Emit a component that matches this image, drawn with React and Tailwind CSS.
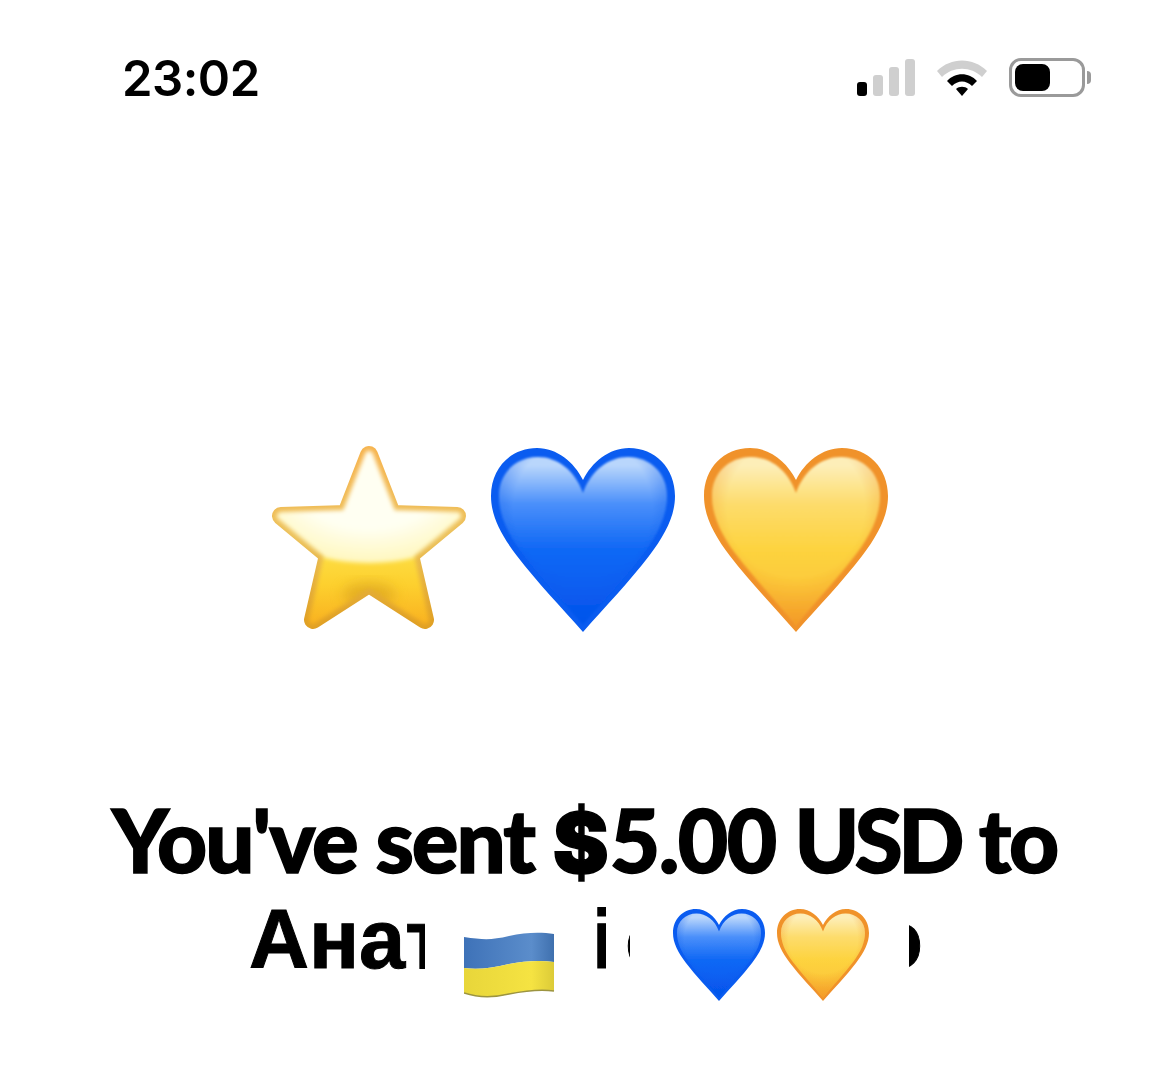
import React from 'react';

const heartOuter = 'M92 184C70 159 46 134 26 108C10 87 0 68 0 48C0 20 20 0 46 0C66 0 83 14 92 32C101 14 118 0 138 0C164 0 184 20 184 48C184 68 174 87 158 108C138 134 114 159 92 184Z';
const heartInner = 'M92 177C72 153 50 130 31 105C16 85 8 66 8 48C8 25 25 9 47 9C66 9 84 22 92 45C100 22 118 9 137 9C159 9 176 25 176 48C176 66 168 85 153 105C134 130 112 153 92 177Z';

const palettes = {
  blue: { edge: '#0a5cf0', shade: '#0454ea', stops: ['#b9d6fc', '#4a8ffa', '#1068f5', '#0657ee'] },
  yellow: { edge: '#f0922a', shade: '#f18f22', stops: ['#fdeeb8', '#fddc6c', '#fdd33f', '#fbc036'] },
};

const Heart = ({ color, size }) => {
  const p = palettes[color];
  const id = `heart-${color}-${size}`;
  return (
    <svg viewBox="0 0 184 184" width={size} height={size}>
      <defs>
        <linearGradient id={id} x1="0" y1="0" x2="0" y2="1">
          <stop offset="0.05" stopColor={p.stops[0]} />
          <stop offset="0.28" stopColor={p.stops[1]} />
          <stop offset="0.55" stopColor={p.stops[2]} />
          <stop offset="1" stopColor={p.stops[3]} />
        </linearGradient>
        <radialGradient id={`${id}-shade`} cx="0.5" cy="0.3" r="0.75">
          <stop offset="0.55" stopColor={p.shade} stopOpacity="0" />
          <stop offset="1" stopColor={p.shade} stopOpacity="0.9" />
        </radialGradient>
        <filter id={`${id}-soft`} x="-10%" y="-10%" width="120%" height="120%">
          <feGaussianBlur stdDeviation="1.2" />
        </filter>
      </defs>
      <path d={heartOuter} fill={p.edge} />
      <g filter={`url(#${id}-soft)`}>
        <path d={heartInner} fill={`url(#${id})`} />
        <path d={heartInner} fill={`url(#${id}-shade)`} />
      </g>
    </svg>
  );
};

const starLine = 'M97 10L120 69L185 71L138 110L153 175L97 139L41 175L56 110L9 71L74 69Z';

const Star = () => (
  <svg viewBox="0 0 195 186" className="w-[195px] h-[186px]">
    <defs>
      <linearGradient id="star-fill" x1="0" y1="0" x2="0" y2="1">
        <stop offset="0.55" stopColor="#fde047" />
        <stop offset="0.75" stopColor="#fdd02e" />
        <stop offset="1" stopColor="#f8ac1e" />
      </linearGradient>
      <linearGradient id="star-edge" x1="0" y1="0" x2="0" y2="1">
        <stop offset="0" stopColor="#f6b44e" />
        <stop offset="0.5" stopColor="#ecc25c" />
        <stop offset="1" stopColor="#e0a126" />
      </linearGradient>
      <radialGradient id="star-glow" cx="0.5" cy="0.5" r="0.5">
        <stop offset="0.55" stopColor="#fffff2" />
        <stop offset="1" stopColor="#fff7bd" />
      </radialGradient>
      <filter id="star-soft" x="-10%" y="-10%" width="120%" height="120%">
        <feGaussianBlur stdDeviation="2" />
      </filter>
      <filter id="star-softer" x="-30%" y="-30%" width="160%" height="160%">
        <feGaussianBlur stdDeviation="7" />
      </filter>
      <mask id="star-mask">
        <path d={starLine} fill="#fff" stroke="#fff" strokeWidth="8" strokeLinejoin="round" filter="url(#star-soft)" />
      </mask>
    </defs>
    <path d={starLine} fill="url(#star-edge)" stroke="url(#star-edge)" strokeWidth="18" strokeLinejoin="round" />
    <g mask="url(#star-mask)">
      <rect width="195" height="186" fill="url(#star-fill)" />
      <ellipse cx="97" cy="150" rx="26" ry="12" fill="#d19a1a" opacity="0.6" filter="url(#star-softer)" />
      <ellipse cx="97" cy="40" rx="125" ry="78" fill="url(#star-glow)" filter="url(#star-soft)" />
    </g>
  </svg>
);

const Flag = () => (
  <svg viewBox="0 0 91 66" className="w-[91px] h-[66px]">
    <defs>
      <linearGradient id="flag-blue" x1="0" y1="0" x2="1" y2="0">
        <stop offset="0" stopColor="#3e72b8" />
        <stop offset="0.75" stopColor="#5b8dcb" />
        <stop offset="1" stopColor="#3f70ae" />
      </linearGradient>
      <linearGradient id="flag-yellow" x1="0" y1="0" x2="1" y2="0">
        <stop offset="0" stopColor="#e8d63a" />
        <stop offset="0.75" stopColor="#f5e342" />
        <stop offset="1" stopColor="#dccb38" />
      </linearGradient>
    </defs>
    <path d="M0 5C20 8 28 8 45 4C62 0 78 0 90 2V30C76 28 60 29 45 32C28 36 14 38 0 36Z" fill="url(#flag-blue)" />
    <path d="M0 36C14 38 28 36 45 32C60 29 76 28 90 30V59C76 57 60 59 45 62C28 66 12 65 0 61Z" fill="url(#flag-yellow)" />
    <path d="M0 61C12 65 28 66 45 62C60 59 76 57 90 59" fill="none" stroke="#9c9440" strokeWidth="1.5" />
  </svg>
);

const SignalBars = () => (
  <div className="flex items-end gap-[6px] h-[37px]">
    <div className="w-[10px] h-[14px] rounded-[3px] bg-black" />
    <div className="w-[10px] h-[21px] rounded-[3px] bg-[#cfcfcf]" />
    <div className="w-[10px] h-[29px] rounded-[3px] bg-[#cfcfcf]" />
    <div className="w-[10px] h-[37px] rounded-[3px] bg-[#cfcfcf]" />
  </div>
);

const Wifi = () => (
  <svg viewBox="0 0 52 38" className="w-[52px] h-[38px]">
    <path d="M1 13C15 -1 37 -1 51 13L46 19C35 8 17 8 6 19Z" fill="#cfcfcf" />
    <path d="M11 23C19 14 33 14 41 23L36 28C30 22 22 22 16 28Z" fill="#000" />
    <path d="M20 31C23 28 29 28 32 31L26 38Z" fill="#000" />
  </svg>
);

const Battery = () => (
  <div className="flex items-center gap-[2px]">
    <div className="w-[76px] h-[39px] rounded-[12px] border-[3px] border-[#9a9a9a] p-[3px]">
      <div className="w-[35px] h-full rounded-[8px] bg-black" />
    </div>
    <div className="w-[4px] h-[13px] rounded-r-full bg-[#9a9a9a]" />
  </div>
);

export default function App() {
  return (
    <div className="w-[1169px] h-[1074px] bg-white text-black overflow-hidden flex flex-col items-center font-['Inter',sans-serif]">
      <header className="w-full flex items-center justify-between pl-[122px] pr-[78px] pt-[48px] h-[106px]">
        <span className="mt-[4px] text-[49px] leading-[56px] font-semibold tracking-[-0.5px]">23:02</span>
        <div className="flex items-center gap-[21px]">
          <SignalBars />
          <Wifi />
          <Battery />
        </div>
      </header>

      <div className="mt-[339px] -ml-[10px] flex items-start">
        <Star />
        <div className="ml-[24px] mt-[3px] flex items-start gap-[29px]">
          <Heart color="blue" size={184} />
          <Heart color="yellow" size={184} />
        </div>
      </div>

      <h1 className="mt-[160px] text-[87px] leading-[96px] font-black tracking-[-2px] whitespace-nowrap font-['Lato',sans-serif] [-webkit-text-stroke:1.5px_black]">
        You've sent <span className="font-['Inter',sans-serif] tracking-[1px] text-[84px]">$</span><span className="tracking-[-1.5px]">5.00</span> <span className="tracking-[-4.5px]">USD</span> to
      </h1>

      <div className="mt-[1px] w-full flex items-start pl-[249px] font-['Liberation_Sans',sans-serif] font-bold text-[83px] leading-[96px] [-webkit-text-stroke:1px_black]">
        <span className="w-[176px] overflow-hidden whitespace-nowrap">Анат</span>
        <div className="ml-[39px] mt-[40px]"><Flag /></div>
        <span className="ml-[37px] w-[14px] overflow-hidden">і</span>
        <div className="ml-[19px] w-[5px] overflow-hidden">
          <span>о</span>
        </div>
        <div className="ml-[43px] mt-[17px] flex gap-[12px]">
          <Heart color="blue" size={92} />
          <Heart color="yellow" size={92} />
        </div>
        <div className="ml-[40px] w-[14px] overflow-hidden flex justify-end">
          <span>о</span>
        </div>
      </div>
    </div>
  );
}
